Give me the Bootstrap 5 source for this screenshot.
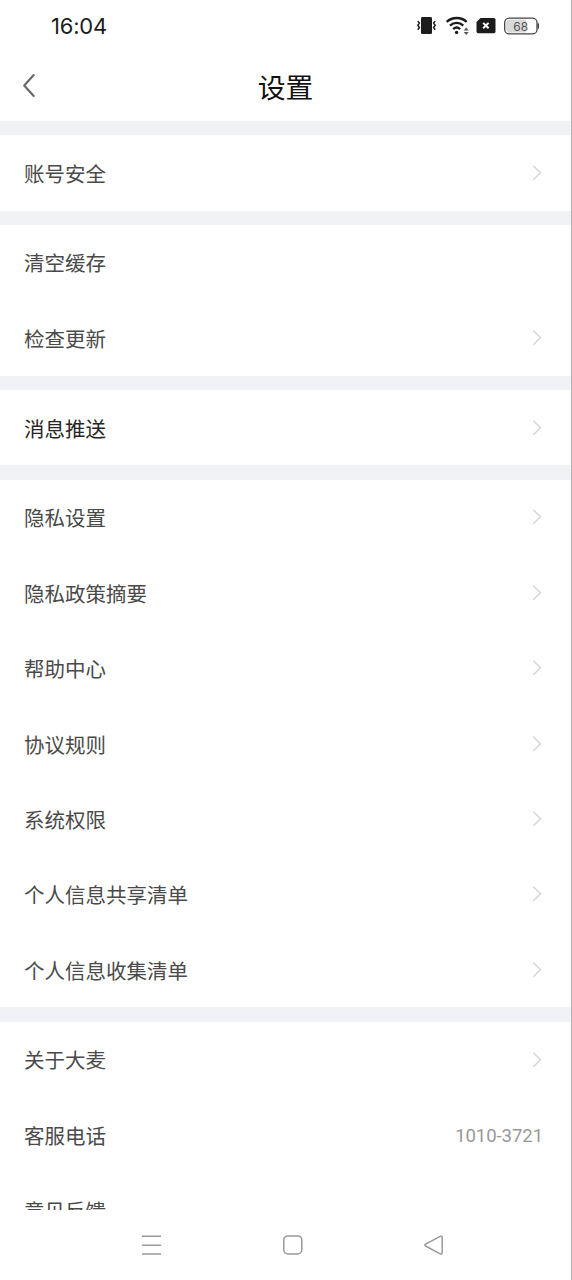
<!DOCTYPE html>
<html lang="zh-CN">
<head>
<meta charset="utf-8">
<meta name="viewport" content="width=device-width, initial-scale=1">
<title>设置</title>
<link href="https://cdn.jsdelivr.net/npm/bootstrap@5.3.0/dist/css/bootstrap.min.css" rel="stylesheet">
<style>
  body { font-family: Roboto, "Noto Sans CJK SC", sans-serif; color: #444; }
  svg { display: block; flex: none; fill: none; }
  .screen { height: 1280px; border-right: 1px solid #b2b3b5; }
  .status { height: 50px; padding: 1px 32px 0 51px; }
  .clock { font: 400 22px/50px Inter, sans-serif; color: #1c1c1c; letter-spacing: -.2px; }
  .title-bar { height: 70.8px; }
  .title-bar h1 { font-size: 27.8px; line-height: 40px; color: #111; padding-top: 7.4px; }
  .back { left: 21px; top: 22px; }
  .settings { min-height: 0; background: #f0f2f5; }
  .group { margin-top: 14.35px; }
  .item { height: 75.4px; padding: 0 28px 0 24px; font-size: 20.5px; line-height: 30px; color: #4a4a4a; background: #fff; }
  .item span { padding-top: 3.8px; }
  .item.strong { color: #262626; }
  .item .phone { font-size: 18.6px; letter-spacing: -.1px; color: #999; padding-top: 2.8px; }
  .keys { height: 70px; }
</style>
</head>
<body class="bg-white overflow-hidden">
<div class="screen d-flex flex-column bg-white overflow-hidden">
  <header class="flex-shrink-0">
    <div class="status d-flex align-items-center justify-content-between">
      <span class="clock">16:04</span>
      <div class="d-flex align-items-center">
        <svg width="124" height="26" viewBox="415 12.4 124 26" role="img" aria-label="状态">
          <rect x="421" y="16.5" width="11" height="17" rx="1.3" fill="#1c1c1c"/>
          <path d="M417.8 20.5l1.6 2-1.6 2.2 1.6 2.2-1.6 2.2M435.2 20.5l-1.6 2 1.6 2.2-1.6 2.2 1.6 2.2" stroke="#1c1c1c" stroke-width="1.5"/>
          <path d="M446.7 21.3c5.5-5.2 14.5-5.2 20 0M450 25c4-3.7 9.5-3.7 13.3 0M453.2 28.6c2.1-2 4.8-2 6.9 0" stroke="#1c1c1c" stroke-width="2.3"/>
          <circle cx="456.6" cy="31.8" r="1.7" fill="#1c1c1c"/>
          <path d="M463.7 30l2.5-3.2 2.5 3.2zM463.7 31.4h5l-2.5 3.1z" fill="#555"/>
          <path d="M480.5 17.3h13.3q1.7 0 1.7 1.7v12q0 1.7-1.7 1.7h-15.6q-1.7 0-1.7-1.7v-9.5z" fill="#1c1c1c"/>
          <path d="M483.2 22.3l5.4 5.4M488.6 22.3l-5.4 5.4" stroke="#fff" stroke-width="2"/>
          <rect x="504.7" y="17.5" width="32.3" height="15.8" rx="4.5" fill="#fff" stroke="#444" stroke-width="1.3"/>
          <path d="M509.5 19h16.5v12.8h-16.5q-3.3 0-3.3-3.3v-6.2q0-3.3 3.3-3.3z" fill="#d9d9d9"/>
          <path d="M538 23q1.3.4 1.3 2.4t-1.3 2.4z" fill="#444" stroke="#444"/>
          <text x="520.8" y="30" text-anchor="middle" font-family="Inter, sans-serif" font-size="12" fill="#555">68</text>
        </svg>
      </div>
    </div>
    <div class="title-bar position-relative d-flex align-items-center justify-content-center">
      <svg class="back position-absolute" width="16" height="28" viewBox="0 0 16 28" aria-label="返回"><path d="M12.7 3L3.2 13.5 12.7 24" stroke="#66696d" stroke-width="2.1" stroke-linecap="round" stroke-linejoin="round"/></svg>
      <h1 class="m-0 fw-normal">设置</h1>
    </div>
  </header>

  <svg class="d-none"><symbol id="chevron" viewBox="0 0 12 18"><path d="M2.3 1.8l7.2 7L2.3 15.8" fill="none" stroke="#d6d6d6" stroke-width="1.5"/></symbol></svg>

  <main class="settings flex-grow-1 overflow-hidden">
    <div class="group">
      <div class="item d-flex align-items-center justify-content-between"><span>账号安全</span><svg width="12" height="18"><use href="#chevron"/></svg></div>
    </div>
    <div class="group">
      <div class="item d-flex align-items-center justify-content-between"><span>清空缓存</span></div>
      <div class="item d-flex align-items-center justify-content-between"><span>检查更新</span><svg width="12" height="18"><use href="#chevron"/></svg></div>
    </div>
    <div class="group">
      <div class="item strong d-flex align-items-center justify-content-between"><span>消息推送</span><svg width="12" height="18"><use href="#chevron"/></svg></div>
    </div>
    <div class="group">
      <div class="item d-flex align-items-center justify-content-between"><span>隐私设置</span><svg width="12" height="18"><use href="#chevron"/></svg></div>
      <div class="item d-flex align-items-center justify-content-between"><span>隐私政策摘要</span><svg width="12" height="18"><use href="#chevron"/></svg></div>
      <div class="item d-flex align-items-center justify-content-between"><span>帮助中心</span><svg width="12" height="18"><use href="#chevron"/></svg></div>
      <div class="item d-flex align-items-center justify-content-between"><span>协议规则</span><svg width="12" height="18"><use href="#chevron"/></svg></div>
      <div class="item d-flex align-items-center justify-content-between"><span>系统权限</span><svg width="12" height="18"><use href="#chevron"/></svg></div>
      <div class="item d-flex align-items-center justify-content-between"><span>个人信息共享清单</span><svg width="12" height="18"><use href="#chevron"/></svg></div>
      <div class="item d-flex align-items-center justify-content-between"><span>个人信息收集清单</span><svg width="12" height="18"><use href="#chevron"/></svg></div>
    </div>
    <div class="group">
      <div class="item d-flex align-items-center justify-content-between"><span>关于大麦</span><svg width="12" height="18"><use href="#chevron"/></svg></div>
      <div class="item d-flex align-items-center justify-content-between"><span>客服电话</span><span class="phone">1010-3721</span></div>
      <div class="item d-flex align-items-center justify-content-between"><span>意见反馈</span></div>
    </div>
  </main>

  <nav class="keys flex-shrink-0 bg-white" aria-label="系统导航">
    <svg class="mx-auto" width="320" height="70" viewBox="126 1210 320 70" stroke="#999" stroke-width="1.5">
      <path d="M142 1236.2h19M142 1245.2h19M142 1254h19"/>
      <rect x="283.8" y="1235.9" width="18" height="18" rx="4.2"/>
      <path d="M425.6 1244.2l14.6-7.8q2-.9 2 1.2v15q0 2.1-2 1.2l-14.6-7.8q-1.8-.9 0-1.8z"/>
    </svg>
  </nav>
</div>
<script src="https://cdn.jsdelivr.net/npm/bootstrap@5.3.0/dist/js/bootstrap.bundle.min.js"></script>
</body>
</html>
